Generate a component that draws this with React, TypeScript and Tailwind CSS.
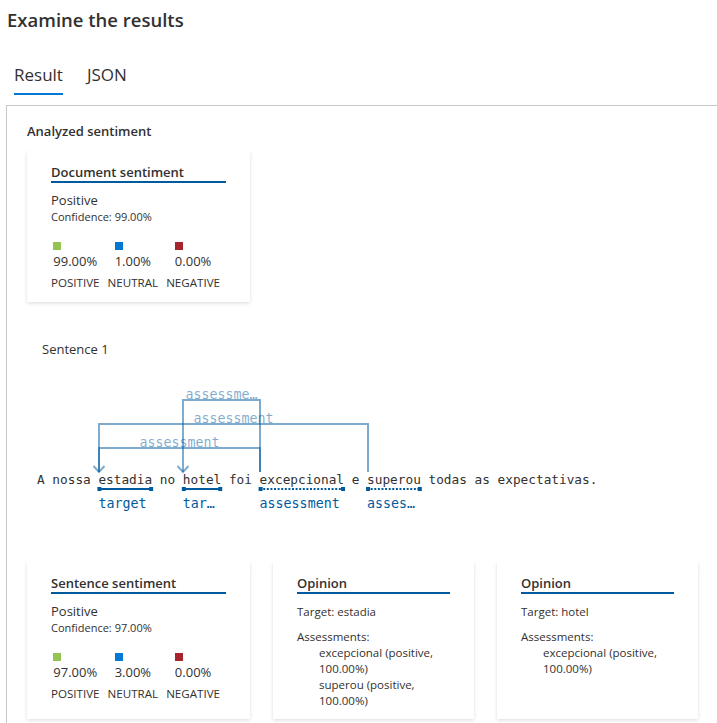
import React from "react";

const CW = 7.676; // char width of sentence font
const X0 = 10;
const sx = (i: number) => X0 + i * CW;

function Scores({ pos, neu, neg }: { pos: string; neu: string; neg: string }) {
  const cols = [
    { c: "bg-[#92c353]", v: pos, l: "POSITIVE" },
    { c: "bg-[#0078d4]", v: neu, l: "NEUTRAL" },
    { c: "bg-[#a4262c]", v: neg, l: "NEGATIVE" },
  ];
  return (
    <div className="mt-[17px] flex gap-[8px]">
      {cols.map((col) => (
        <div key={col.l} className="flex flex-col items-center">
          <div className="flex flex-col items-start">
            <div className={`h-[8px] w-[8px] ${col.c}`} />
            <div className="mt-[2px] text-[13px] leading-[18px]">{col.v}</div>
          </div>
          <div className="mt-[5px] text-[11.6px] leading-[16px]">{col.l}</div>
        </div>
      ))}
    </div>
  );
}

function CardTitle({ children }: { children: React.ReactNode }) {
  return (
    <div className="border-b-2 border-[#005a9e] text-[13px] font-semibold leading-[18px]">
      {children}
    </div>
  );
}

const shadow =
  "shadow-[0_1.6px_3.6px_rgba(0,0,0,0.13),0_0.3px_0.9px_rgba(0,0,0,0.11)]";

function SentimentCard({
  title,
  conf,
  pos,
  neu,
  neg,
}: {
  title: string;
  conf: string;
  pos: string;
  neu: string;
  neg: string;
}) {
  return (
    <div className={`w-[223px] bg-white px-[24px] pb-[11px] pt-[13px] ${shadow}`}>
      <CardTitle>{title}</CardTitle>
      <div className="mt-[8px] text-[13px] leading-[18px]">Positive</div>
      <div className="text-[11px] leading-[16px]">Confidence: {conf}</div>
      <Scores pos={pos} neu={neu} neg={neg} />
    </div>
  );
}

function OpinionCard({ target, items }: { target: string; items: string[] }) {
  return (
    <div className={`w-[201px] bg-white px-[24px] pb-[10px] pt-[13px] ${shadow}`}>
      <CardTitle>Opinion</CardTitle>
      <div className="mt-[10px] text-[11.5px] leading-[16px]">
        <span className="font-medium">Target:</span> {target}
      </div>
      <div className="mt-[9px] text-[11.5px] leading-[16px] font-medium">Assessments:</div>
      <div className="pl-[22px] text-[11.5px] leading-[16px]">
        {items.map((t) => (
          <div key={t}>{t}</div>
        ))}
      </div>
    </div>
  );
}

function Diagram() {
  const blue = "#005a9e";
  const mono = "'DejaVu Sans Mono', monospace";
  const arcs = [
    "M156,114 V42 H233 V114",
    "M72,114 V66 H341 V114",
    "M72,114 V90 H233 V114",
  ];
  const underline = (i0: number, n: number, dotted: boolean, key: string) => {
    const a = sx(i0);
    const b = sx(i0 + n);
    return (
      <g key={key}>
        <line
          x1={a}
          x2={b}
          y1={131}
          y2={131}
          stroke={blue}
          strokeWidth={2}
          strokeDasharray={dotted ? "2 1.6" : undefined}
        />
        <rect x={a - 1} y={129} width={4} height={4} fill={blue} />
        <rect x={b - 3} y={129} width={4} height={4} fill={blue} />
      </g>
    );
  };
  return (
    <svg width={690} height={160} className="block">
      {arcs.map((d) => (
        <path key={d} d={d} fill="none" stroke={blue} strokeOpacity={0.5} strokeWidth={2} />
      ))}
      {[72, 156].map((x) => (
        <path
          key={x}
          d={`M${x - 5.5},108 L${x},114 L${x + 5.5},108`}
          fill="none"
          stroke={blue}
          strokeOpacity={0.5}
          strokeWidth={2}
        />
      ))}
      <g fontFamily={mono} fontSize={13.3} fill={blue} fillOpacity={0.5}>
        <text x={194.5} y={41} textAnchor="middle">assessme…</text>
        <text x={206.5} y={65} textAnchor="middle">assessment</text>
        <text x={152.5} y={89} textAnchor="middle">assessment</text>
      </g>
      <text x={X0} y={126} fontFamily={mono} fontSize={12.75} fill="#323130" xmlSpace="preserve">
        A nossa estadia no hotel foi excepcional e superou todas as expectativas.
      </text>
      {underline(8, 7, false, "u1")}
      {underline(19, 5, false, "u2")}
      {underline(29, 11, true, "u3")}
      {underline(43, 7, true, "u4")}
      <g fontFamily={mono} fontSize={13.3} fill={blue}>
        <text x={sx(8)} y={150}>target</text>
        <text x={sx(19)} y={150}>tar…</text>
        <text x={sx(29)} y={150}>assessment</text>
        <text x={sx(43)} y={150}>asses…</text>
      </g>
    </svg>
  );
}

export default function App() {
  return (
    <div
      className="h-[723px] w-[717px] overflow-hidden bg-white text-[#323130]"
      style={{ fontFamily: "'Open Sans', 'Noto Sans', sans-serif" }}
    >
      <div className="pl-[7px] pt-[6px] text-[18.5px] font-semibold leading-[28px]">
        Examine the results
      </div>
      <div className="ml-[14px] mt-[30px] flex gap-[24px]">
        <div className="border-b-2 border-[#0078d4] pb-[7px] text-[17px] leading-[22px]">
          Result
        </div>
        <div className="border-b-2 border-transparent pb-[7px] text-[17px] leading-[22px]">
          JSON
        </div>
      </div>
      <div className="ml-[6px] mt-[10px] h-[700px] border-l border-t border-[#c8c8c8] pl-[20px] pt-[16px]">
        <div className="text-[13px] font-semibold leading-[18px]">Analyzed sentiment</div>
        <div className="mt-[10px]">
          <SentimentCard title="Document sentiment" conf="99.00%" pos="99.00%" neu="1.00%" neg="0.00%" />
        </div>
        <div className="ml-[15px] mt-[38px] text-[13px] leading-[18px]">Sentence 1</div>
        <Diagram />
        <div className="mt-[43px] flex items-stretch gap-[23px]">
          <SentimentCard title="Sentence sentiment" conf="97.00%" pos="97.00%" neu="3.00%" neg="0.00%" />
          <OpinionCard
            target="estadia"
            items={["excepcional (positive, 100.00%)", "superou (positive, 100.00%)"]}
          />
          <OpinionCard target="hotel" items={["excepcional (positive, 100.00%)"]} />
        </div>
      </div>
    </div>
  );
}
